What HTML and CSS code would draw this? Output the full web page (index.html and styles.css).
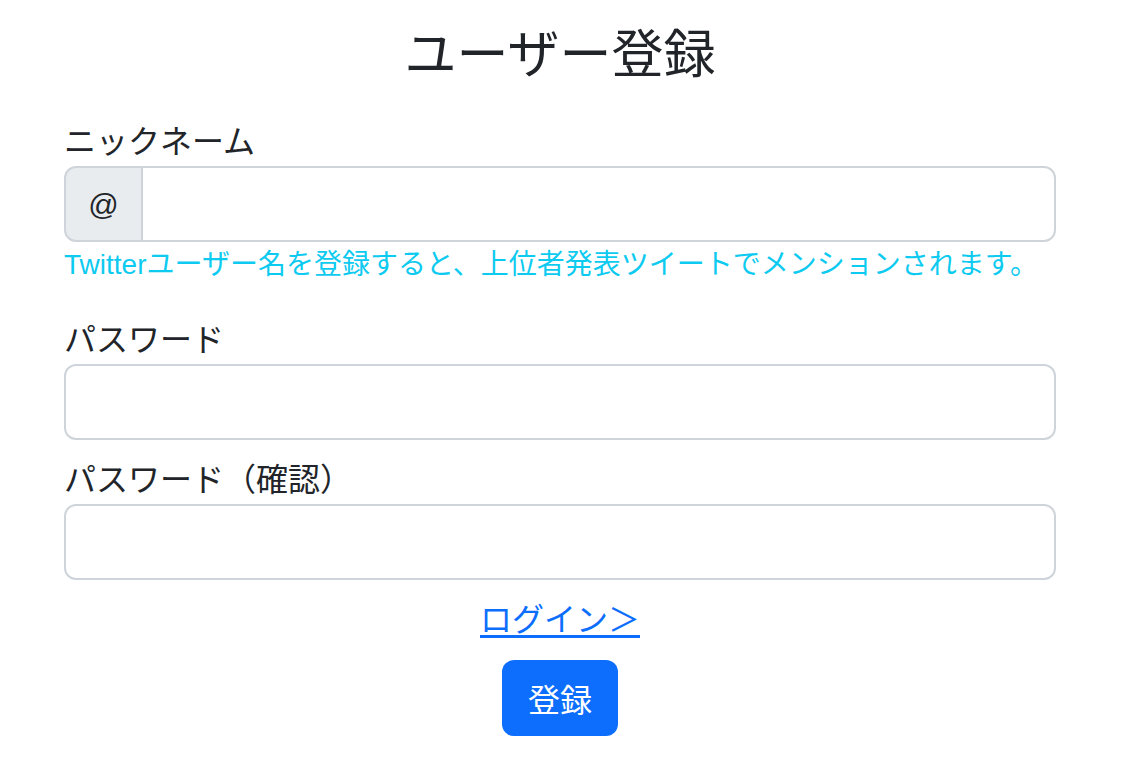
FILE: index.html
```html
<!DOCTYPE html>
<html lang="ja">
<head>
<meta charset="utf-8">
<link rel="stylesheet" href="styles.css">
</head>
<body>
<main class="page">
  <h2 class="title">ユーザー登録</h2>
  <form class="form">
    <div class="group group-nick">
      <label class="label">ニックネーム</label>
      <div class="input-group">
        <span class="addon">@</span>
        <input class="control control-joined" type="text">
      </div>
      <div class="help">Twitterユーザー名を登録すると、上位者発表ツイートでメンションされます。</div>
    </div>
    <div class="group">
      <label class="label">パスワード</label>
      <input class="control" type="password">
    </div>
    <div class="group">
      <label class="label">パスワード（確認）</label>
      <input class="control" type="password">
    </div>
    <div class="center">
      <a class="link" href="#">ログイン＞</a>
    </div>
    <div class="center">
      <button class="btn" type="button">登録</button>
    </div>
  </form>
</main>
</body>
</html>
```

FILE: styles.css
```css
html, body {
  margin: 0;
  padding: 0;
  background: #fff;
}
body {
  font-family: "Liberation Sans", "Noto Sans CJK JP", sans-serif;
  color: #212529;
  font-size: 32px;
  line-height: 1.5;
}
.page {
  width: 992px;
  margin-left: 64px;
  padding-top: 24px;
}
.title {
  margin: 0 0 32px;
  text-align: center;
  font-size: 52px;
  font-weight: 400;
  line-height: 1.2;
}
.form {
  display: flex;
  flex-direction: column;
}
.group {
  display: flex;
  flex-direction: column;
  margin-bottom: 16px;
}
.group-nick {
  margin-bottom: 30px;
}
.label {
  display: block;
  font-size: 32px;
  line-height: 48px;
}
.input-group {
  display: flex;
}
.addon {
  display: flex;
  align-items: center;
  justify-content: center;
  width: 75px;
  height: 72px;
  background: #e9ecef;
  border: 2px solid #ced4da;
  border-radius: 12px 0 0 12px;
  font-size: 30px;
  color: #212529;
}
.control {
  box-sizing: border-box;
  height: 76px;
  width: 100%;
  border: 2px solid #ced4da;
  border-radius: 12px;
  background: #fff;
  font-size: 32px;
  padding: 0 24px;
  margin: 0;
}
.control-joined {
  flex: 1;
  border-radius: 0 12px 12px 0;
  margin-left: -2px;
}
.help {
  margin-top: 2px;
  font-size: 28px;
  line-height: 42px;
  color: #0dcaf0;
}
.center {
  display: flex;
  justify-content: center;
}
.link {
  color: #0d6efd;
  font-size: 32px;
  line-height: 48px;
  text-decoration: underline;
  text-underline-offset: 4px;
  margin-bottom: 16px;
}
.btn {
  width: 116px;
  height: 76px;
  background: #0d6efd;
  color: #fff;
  border: none;
  border-radius: 12px;
  font-family: "Liberation Sans", "Noto Sans CJK JP", sans-serif;
  font-size: 32px;
  padding: 0;
}
```
